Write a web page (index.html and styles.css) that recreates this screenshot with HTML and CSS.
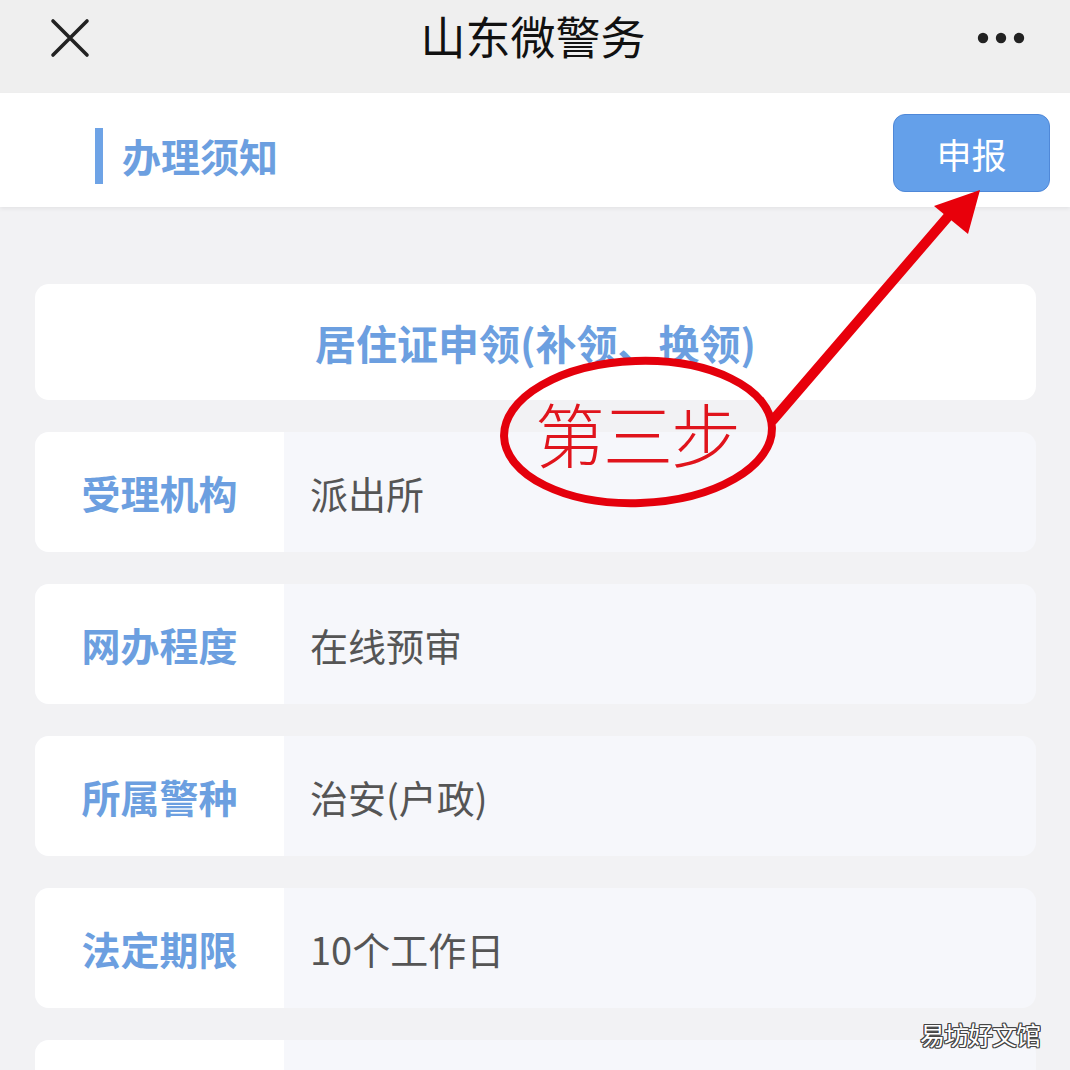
FILE: index.html
```html
<!DOCTYPE html>
<html>

<head>
    <title>山东微警务</title>
    <meta name="viewport" content="width=device-width, initial-scale=1">
    <link rel="stylesheet" href="styles.css">
</head>
<body>
    <div class="top-bar">
        <div class="bar-side">
            <svg class="close-icon" width="40" height="40" viewBox="0 0 40 40">
                <path d="M3 3 L37 37 M37 3 L3 37" stroke="#222" stroke-width="3.6" stroke-linecap="round" fill="none"/>
            </svg>
        </div>
        <div class="top-title">山东微警务</div>
        <div class="bar-side bar-right">
            <svg class="more-icon" width="50" height="14" viewBox="0 0 50 14">
                <circle cx="7" cy="7" r="5.2" fill="#222"/>
                <circle cx="25" cy="7" r="5.2" fill="#222"/>
                <circle cx="43" cy="7" r="5.2" fill="#222"/>
            </svg>
        </div>
    </div>

    <div class="section-head">
        <div class="section-title">办理须知</div>
        <button class="apply-button">申报</button>
    </div>

    <div class="content">
        <div class="title-card">居住证申领(补领、换领)</div>

        <div class="row">
            <div class="row-label">受理机构</div>
            <div class="row-value">派出所</div>
        </div>
        <div class="row">
            <div class="row-label">网办程度</div>
            <div class="row-value">在线预审</div>
        </div>
        <div class="row">
            <div class="row-label">所属警种</div>
            <div class="row-value">治安(户政)</div>
        </div>
        <div class="row">
            <div class="row-label">法定期限</div>
            <div class="row-value">10个工作日</div>
        </div>
        <div class="row row-cut">
            <div class="row-label"></div>
            <div class="row-value"></div>
        </div>
    </div>

    <!-- red annotation drawn over the screenshot -->
    <svg class="annotation" width="1070" height="1070" viewBox="0 0 1070 1070">
        <path d="M773 420 L952 212" stroke="#e8000b" stroke-width="10" stroke-linecap="round" fill="none"/>
        <polygon points="980,190 934,206 968,234" fill="#e8000b"/>
        <ellipse cx="638" cy="432" rx="134" ry="71" stroke="#e4000c" stroke-width="8" fill="none" transform="rotate(-2 638 432)"/>
    </svg>
    <div class="step-text">第三步</div>

    <div class="watermark">易坊好文馆</div>
</body>

</html>
```

FILE: styles.css
```css
body {
    margin: 0;
    padding: 0;
    width: 1070px;
    height: 1070px;
    overflow: hidden;
    position: relative;
    font-family: "Noto Sans CJK SC", "Noto Sans", sans-serif;
    background-color: #f2f2f4;
}

.top-bar {
    height: 93px;
    display: flex;
    align-items: center;
    padding: 0 44px 0 50px;
    background-color: #efefef;
    box-sizing: border-box;
}

.bar-side {
    width: 120px;
    display: flex;
    margin-top: -18px;
}

.bar-right {
    justify-content: flex-end;
}

.top-title {
    flex: 1;
    text-align: center;
    font-size: 45px;
    color: #111;
    margin-top: -22px;
    padding-right: 10px;
}

.section-head {
    height: 114px;
    display: flex;
    align-items: center;
    justify-content: space-between;
    padding: 0 20px 0 95px;
    background-color: #ffffff;
    box-shadow: 0 2px 4px rgba(0, 0, 0, 0.06);
    box-sizing: border-box;
}

.section-title {
    border-left: 8px solid #6ea3e6;
    padding-left: 19px;
    height: 56px;
    line-height: 54px;
    font-size: 39px;
    font-weight: 700;
    color: #6c9fe0;
    margin-top: 12px;
}

.apply-button {
    width: 157px;
    height: 78px;
    margin-top: 6px;
    border: 1px solid #4f88d8;
    border-radius: 12px;
    background-color: #64a0ea;
    color: #ffffff;
    font-family: "Noto Sans CJK SC", sans-serif;
    font-size: 35px;
}

.content {
    display: flex;
    flex-direction: column;
    gap: 32px;
    padding: 77px 34px 0 35px;
}

.title-card {
    height: 116px;
    display: flex;
    align-items: center;
    justify-content: center;
    border-radius: 14px;
    background-color: #ffffff;
    font-size: 41px;
    font-weight: 700;
    color: #6c9fe0;
}

.row {
    height: 120px;
    display: flex;
    flex-shrink: 0;
    border-radius: 14px;
    overflow: hidden;
    background-color: #f6f7fb;
}

.row-cut {
    height: 30px;
    border-radius: 14px 14px 0 0;
}

.row-label {
    width: 249px;
    display: flex;
    align-items: center;
    justify-content: center;
    background-color: #ffffff;
    font-size: 39px;
    font-weight: 700;
    color: #6c9fe0;
}

.row-value {
    flex: 1;
    display: flex;
    align-items: center;
    padding-left: 26px;
    font-size: 38px;
    color: #555;
}

.annotation {
    position: absolute;
    left: 0;
    top: 0;
}

.step-text {
    position: absolute;
    left: 535px;
    top: 382px;
    font-size: 70px;
    font-weight: 300;
    color: #e0141c;
    letter-spacing: -2px;
}

.watermark {
    position: absolute;
    right: 30px;
    bottom: 18px;
    font-size: 25px;
    color: #ffffff;
    letter-spacing: -1px;
    text-shadow: 1px 0 0 #444, -1px 0 0 #444, 0 1px 0 #444, 0 -1px 0 #444,
        1px 1px 0 #444, -1px -1px 0 #444, 1px -1px 0 #444, -1px 1px 0 #444;
}
```
